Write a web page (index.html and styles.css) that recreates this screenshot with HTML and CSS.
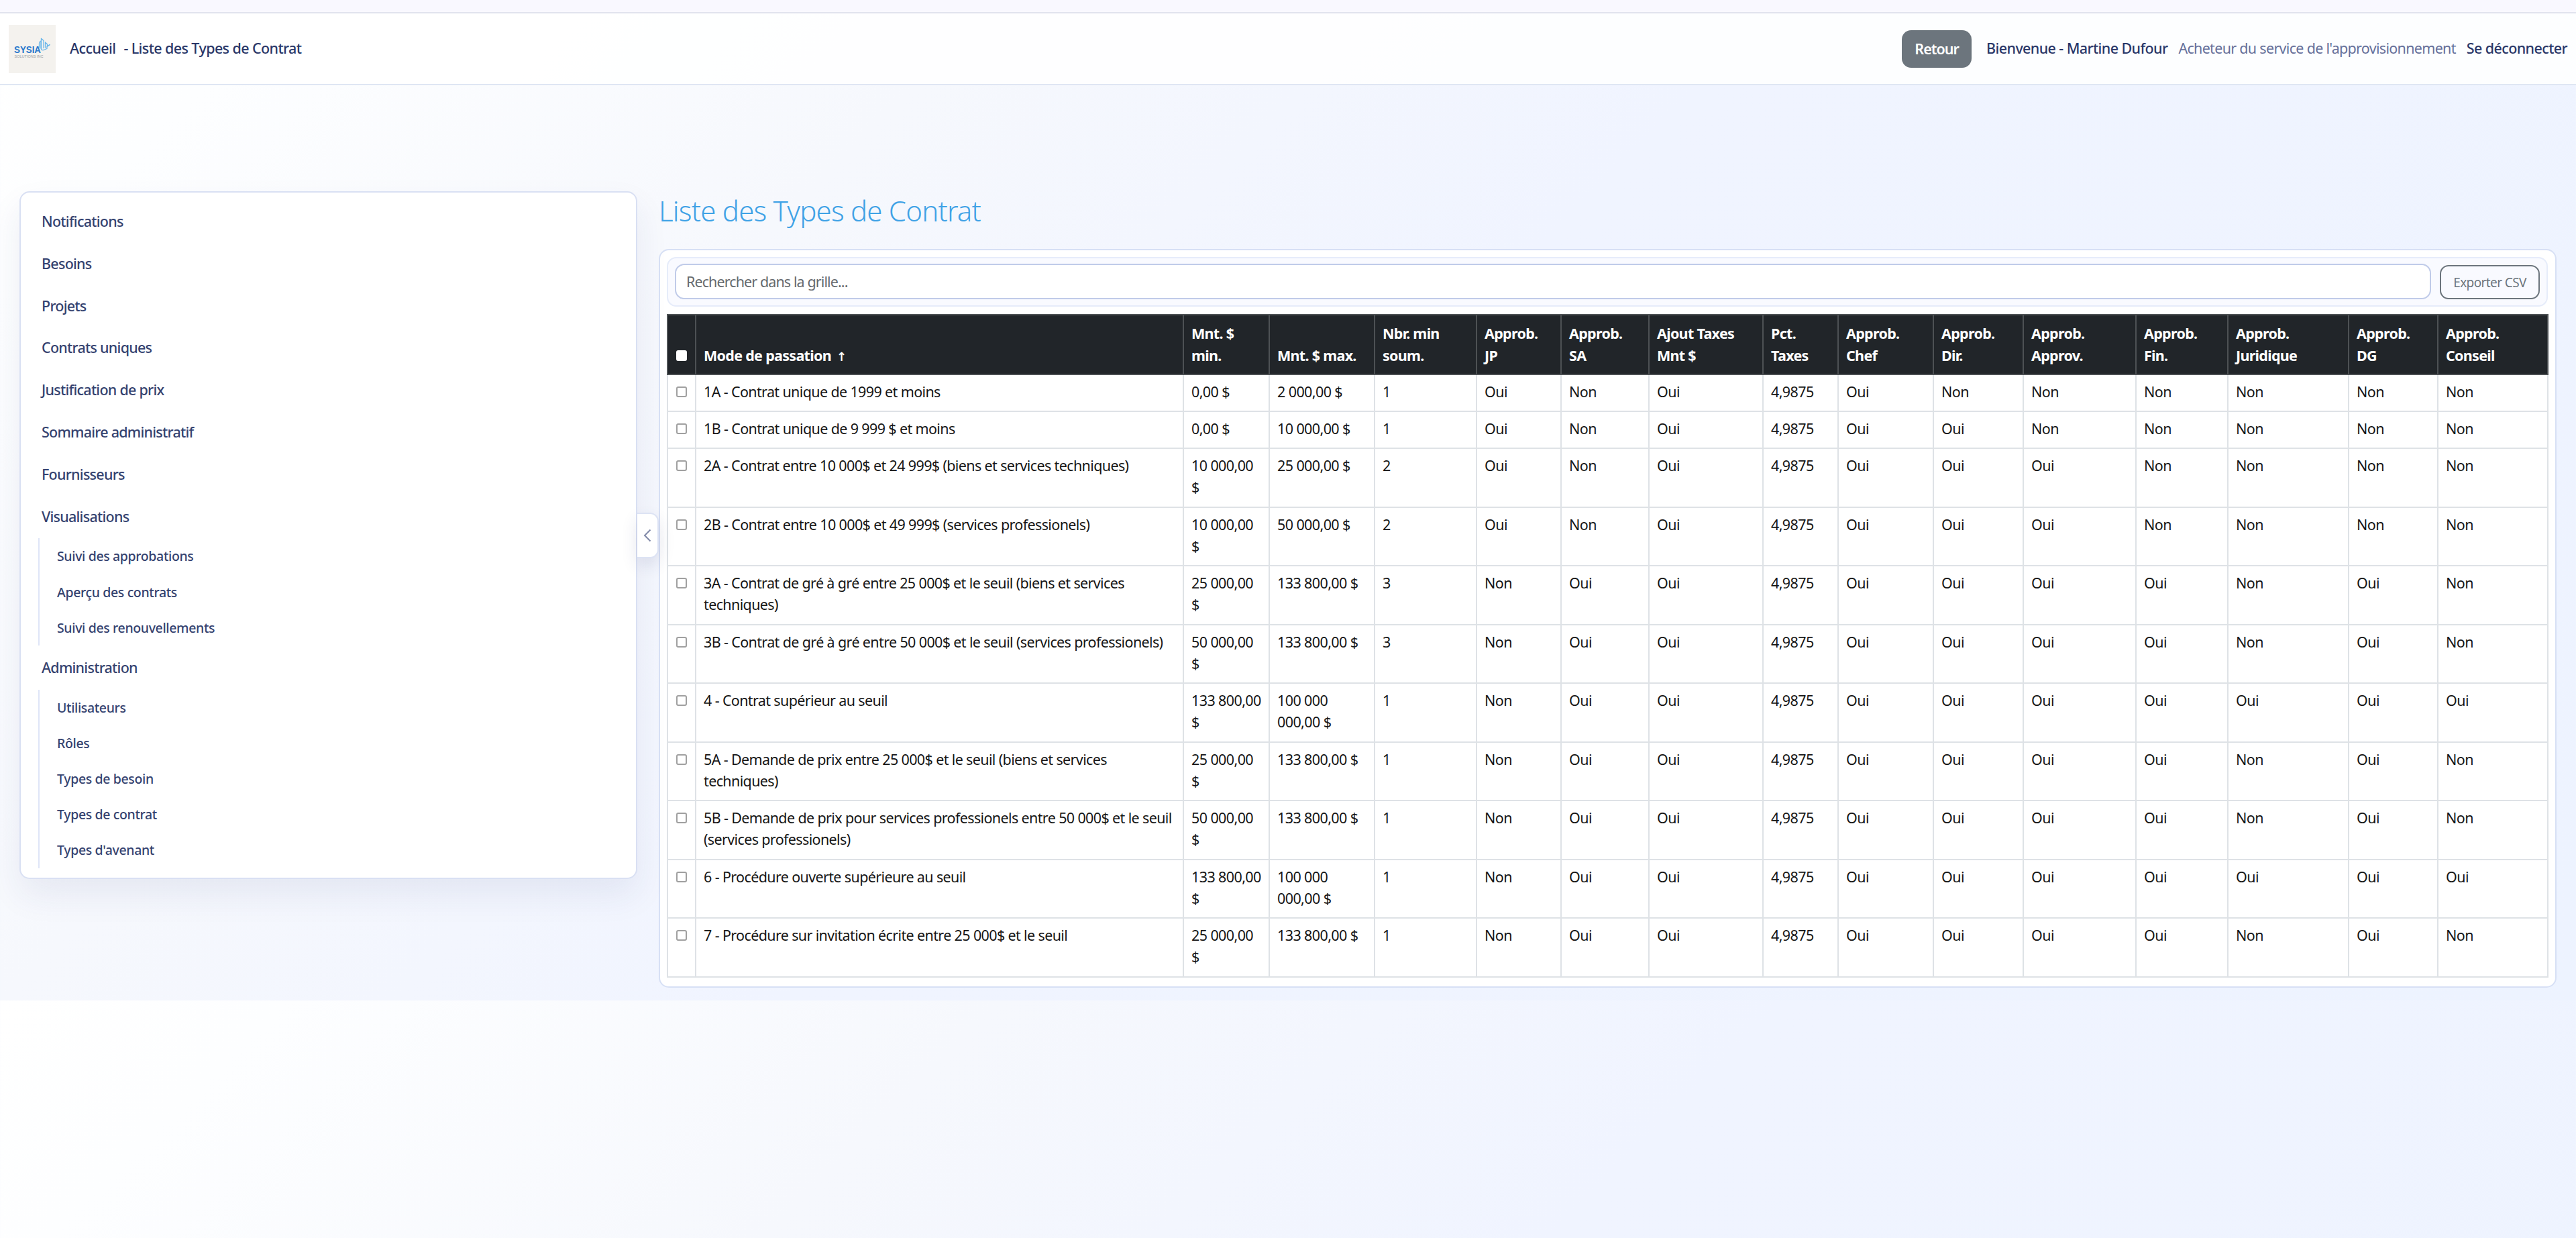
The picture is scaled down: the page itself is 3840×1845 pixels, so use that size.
FILE: index.html
```html
<!DOCTYPE html>
<html lang="fr">
<head>
    <meta charset="UTF-8">
    <meta name="viewport" content="width=device-width, initial-scale=1.0">
    <title>Liste des Types de Contrat</title>
    <link rel="stylesheet" href="styles.css">
</head>
<body>
    <header class="navbar">
        <div class="brand">
            <svg class="logo" viewBox="0 0 70 72">
                <rect width="70" height="72" fill="#f4f2ee"/>
                <text class="logo-name" x="8" y="42" textLength="40" lengthAdjust="spacingAndGlyphs">SYSIA</text>
                <text class="logo-sub" x="8.5" y="48.5" textLength="43" lengthAdjust="spacingAndGlyphs">SOLUTIONS INC</text>
                <g fill="none" stroke="#6ab6ea" stroke-width="1.3" stroke-linecap="round" stroke-linejoin="round">
                    <path d="M45.500 34V28q0-3 2.500-4V35"/>
                    <path d="M48.500 20.500v15.500q0 2 3.500 1.500l5-2v-3l4-3"/>
                    <path d="M48.500 20.500l3.500 3v11"/>
                    <path d="M54.500 34V26l3 3v3l3.500-2"/>
                </g>
            </svg>
            <a class="nav-link home">Accueil</a>
            <span class="nav-link">- Liste des Types de Contrat</span>
        </div>
        <div class="user">
            <button class="btn-back">Retour</button>
            <span class="nav-link welcome">Bienvenue - Martine Dufour</span>
            <span class="role">Acheteur du service de l'approvisionnement</span>
            <a class="nav-link">Se déconnecter</a>
        </div>
    </header>

    <div class="layout">
        <aside class="sidebar">
            <ul class="menu">
                <li>Notifications</li>
                <li>Besoins</li>
                <li>Projets</li>
                <li>Contrats uniques</li>
                <li>Justification de prix</li>
                <li>Sommaire administratif</li>
                <li>Fournisseurs</li>
                <li>Visualisations</li>
            </ul>
            <ul class="submenu">
                <li>Suivi des approbations</li>
                <li>Aperçu des contrats</li>
                <li>Suivi des renouvellements</li>
            </ul>
            <ul class="menu">
                <li>Administration</li>
            </ul>
            <ul class="submenu">
                <li>Utilisateurs</li>
                <li>Rôles</li>
                <li>Types de besoin</li>
                <li>Types de contrat</li>
                <li>Types d'avenant</li>
            </ul>
            <button class="toggle" aria-label="Réduire le menu">
                <svg viewBox="0 0 12 20"><path d="M10.500 1.500L2 10l8.500 8.500" fill="none" stroke="#8089a8" stroke-width="2"/></svg>
            </button>
        </aside>

        <main class="content">
            <h1>Liste des Types de Contrat</h1>
            <div class="card">
                <div class="toolbar">
                    <input class="search" type="text" placeholder="Rechercher dans la grille...">
                    <button class="btn-export">Exporter CSV</button>
                </div>
                <table class="grid">
                    <colgroup>
                        <col class="c-check"><col class="c-mode"><col class="c-min"><col class="c-max">
                        <col class="c-nbr"><col class="c-jp"><col class="c-sa"><col class="c-ajout">
                        <col class="c-pct"><col class="c-chef"><col class="c-dir"><col class="c-approv">
                        <col class="c-fin"><col class="c-jur"><col class="c-dg"><col class="c-conseil">
                    </colgroup>
                    <thead>
                        <tr>
                            <th><input type="checkbox"></th>
                            <th>Mode de passation <span class="sort">↑</span></th>
                            <th>Mnt. $<br>min.</th>
                            <th>Mnt. $ max.</th>
                            <th>Nbr. min<br>soum.</th>
                            <th>Approb.<br>JP</th>
                            <th>Approb.<br>SA</th>
                            <th>Ajout Taxes<br>Mnt $</th>
                            <th>Pct.<br>Taxes</th>
                            <th>Approb.<br>Chef</th>
                            <th>Approb.<br>Dir.</th>
                            <th>Approb.<br>Approv.</th>
                            <th>Approb.<br>Fin.</th>
                            <th>Approb.<br>Juridique</th>
                            <th>Approb.<br>DG</th>
                            <th>Approb.<br>Conseil</th>
                        </tr>
                    </thead>
                    <tbody id="rows"></tbody>
                </table>
            </div>
        </main>
    </div>

    <script>
        // mode, min, max, nbr, then JP SA Ajout | Chef Dir Approv Fin Jur DG Conseil (O = Oui, N = Non)
        const contrats = [
            ["1A - Contrat unique de 1999 et moins", "0,00 $", "2 000,00 $", 1, "ONO", "ONNNNNN"],
            ["1B - Contrat unique de 9 999 $ et moins", "0,00 $", "10 000,00 $", 1, "ONO", "OONNNNN"],
            ["2A - Contrat entre 10 000$ et 24 999$ (biens et services techniques)", "10 000,00<br>$", "25 000,00 $", 2, "ONO", "OOONNNN"],
            ["2B - Contrat entre 10 000$ et 49 999$ (services professionels)", "10 000,00<br>$", "50 000,00 $", 2, "ONO", "OOONNNN"],
            ["3A - Contrat de gré à gré entre 25 000$ et le seuil (biens et services<br>techniques)", "25 000,00<br>$", "133 800,00 $", 3, "NOO", "OOOONON"],
            ["3B - Contrat de gré à gré entre 50 000$ et le seuil (services professionels)", "50 000,00<br>$", "133 800,00 $", 3, "NOO", "OOOONON"],
            ["4 - Contrat supérieur au seuil", "133 800,00<br>$", "100 000<br>000,00 $", 1, "NOO", "OOOOOOO"],
            ["5A - Demande de prix entre 25 000$ et le seuil (biens et services<br>techniques)", "25 000,00<br>$", "133 800,00 $", 1, "NOO", "OOOONON"],
            ["5B - Demande de prix pour services professionels entre 50 000$ et le seuil<br>(services professionels)", "50 000,00<br>$", "133 800,00 $", 1, "NOO", "OOOONON"],
            ["6 - Procédure ouverte supérieure au seuil", "133 800,00<br>$", "100 000<br>000,00 $", 1, "NOO", "OOOOOOO"],
            ["7 - Procédure sur invitation écrite entre 25 000$ et le seuil", "25 000,00<br>$", "133 800,00 $", 1, "NOO", "OOOONON"]
        ];

        function ouiNon(flags) {
            return [...flags].map(f => f === "O" ? "Oui" : "Non");
        }

        document.getElementById("rows").innerHTML = contrats.map(c => {
            const cells = [c[0], c[1], c[2], c[3], ...ouiNon(c[4]), "4,9875", ...ouiNon(c[5])];
            const tall = c[1].includes("<br>") ? ' class="tall"' : "";
            return `<tr${tall}><td><input type="checkbox"></td>${cells.map(v => `<td>${v}</td>`).join("")}</tr>`;
        }).join("");
    </script>
</body>
</html>
```
FILE: styles.css
```css
* {
    box-sizing: border-box;
    margin: 0;
    padding: 0;
}

body {
    min-height: 1490px;
    padding-top: 18px;
    font-family: "Noto Sans", "Open Sans", sans-serif;
    font-size: 21.5px;
    letter-spacing: -0.6px;
    line-height: 32.4px;
    color: #161616;
    background: linear-gradient(135deg, #ffffff 0%, #fdfeff 8%, #f6f8fd 28%, #f0f4ff 50%, #edf3ff 100%);
}

html::before {
    content: "";
    position: absolute;
    top: 0;
    left: 0;
    width: 100%;
    height: 18px;
    background: #f9f8ff;
}

button, input {
    font-family: inherit;
    letter-spacing: inherit;
}

ul {
    list-style: none;
}

/* Navbar */
.navbar {
    display: flex;
    justify-content: space-between;
    align-items: center;
    height: 109px;
    padding: 0 13px 0 13px;
    background: rgba(255, 255, 255, 0.85);
    border-top: 2px solid #e1e3ee;
    border-bottom: 2px solid #dfe6f3;
}

.brand, .user {
    display: flex;
    align-items: center;
}

.logo {
    width: 70px;
    height: 72px;
    margin-right: 21px;
}

.logo-name {
    font: bold 14px "Liberation Sans", sans-serif;
    letter-spacing: 0;
    fill: #2878cc;
}

.logo-sub {
    font: 5.5px "Liberation Sans", sans-serif;
    letter-spacing: 0;
    fill: #9a9da3;
}

.nav-link {
    font-weight: 500;
    color: #2a3768;
}

.home {
    margin-right: 12px;
}

.btn-back {
    width: 104px;
    height: 56px;
    margin-right: 22px;
    border: none;
    border-radius: 14px;
    background: #6c757d;
    color: #fff;
    font-size: 21.5px;
    font-weight: 600;
    letter-spacing: -1px;
}

.welcome, .role {
    margin-right: 16px;
}

.role {
    color: #66709a;
    letter-spacing: -0.69px;
}

/* Page layout */
.layout {
    display: flex;
    align-items: flex-start;
    gap: 32px;
    padding: 158px 29px 19px;
}

/* Sidebar */
.sidebar {
    position: relative;
    flex: none;
    width: 921px;
    height: 1025px;
    padding: 12px 26px;
    background: #fff;
    border: 2px solid #d9e0f3;
    border-radius: 15px;
    box-shadow: 0 24px 50px rgba(40, 50, 110, 0.08);
    color: #34426f;
    font-weight: 500;
}

.menu li {
    height: 62.8px;
    padding-left: 5px;
    line-height: 62.8px;
    letter-spacing: -0.74px;
}

.submenu {
    margin: 1px 0 2px;
    padding-left: 26px;
    border-left: 2px solid #dfe5f8;
}

.submenu li {
    height: 53.2px;
    font-size: 19.5px;
    line-height: 53.2px;
    letter-spacing: -0.36px;
}

.toggle {
    position: absolute;
    top: 477px;
    left: 919px;
    width: 32px;
    height: 68px;
    padding-top: 4px;
    background: #fff;
    border: 2px solid #dde3f4;
    border-left: none;
    border-radius: 0 13px 13px 0;
    box-shadow: 0 10px 24px rgba(40, 50, 110, 0.12);
}

.toggle svg {
    width: 12px;
    height: 20px;
}

/* Content */
.content {
    flex: 1;
    min-width: 0;
}

h1 {
    height: 86px;
    font-size: 42px;
    font-weight: 300;
    line-height: 57px;
    letter-spacing: -0.79px;
    color: #3fa2e6;
}

.card {
    padding: 10px 11px 13px 10px;
    background: #fff;
    border: 2px solid #d7e0f5;
    border-radius: 15px;
}

.toolbar {
    display: flex;
    align-items: flex-end;
    gap: 13px;
    height: 74px;
    margin-bottom: 11px;
    padding: 9px 10px;
    background: #f9faff;
    border: 2px solid #e6ecfa;
    border-radius: 14px;
}

.search {
    flex: 1;
    height: 53px;
    padding: 0 15px;
    background: #fff;
    border: 2px solid #c0cbe9;
    border-radius: 14px;
    font-size: 21.5px;
}

.search::placeholder {
    color: #666a6e;
    letter-spacing: -0.9px;
}

.btn-export {
    width: 149px;
    height: 51px;
    background: transparent;
    border: 2px solid #6c757d;
    border-radius: 13px;
    color: #6c757d;
    font-size: 19px;
    letter-spacing: -0.6px;
}

/* Grid */
.grid {
    width: 100%;
    table-layout: fixed;
    border-collapse: collapse;
    background: #fff;
}

.grid th, .grid td {
    padding: 9px 0 0 11px;
    border: 2px solid #dee2e6;
    text-align: left;
    vertical-align: top;
    white-space: nowrap;
}

.grid th {
    height: 89px;
    padding: 0 0 11px 11px;
    background: #212529;
    border-color: #4d5154;
    color: #fff;
    vertical-align: bottom;
    letter-spacing: -0.7px;
}

.grid td {
    height: 55px;
}

.grid .tall td {
    height: 87.5px;
}

/* mode de passation */
.grid td:nth-child(2) {
    letter-spacing: -0.63px;
}

.grid input {
    appearance: none;
    width: 16px;
    height: 16px;
    margin-left: 1px;
    background: #fff;
    border: 2px solid #a0a0a0;
    border-radius: 3px;
}

.grid th input {
    border-color: #fff;
}

.sort {
    margin-left: 3px;
    font-family: "DejaVu Sans", sans-serif;
    font-size: 18px;
    line-height: 1;
}

.c-check { width: 42px; }
.c-mode { width: 727px; }
.c-min { width: 128px; }
.c-max { width: 157px; }
.c-nbr { width: 152px; }
.c-jp { width: 126px; }
.c-sa { width: 131px; }
.c-ajout { width: 170px; }
.c-pct { width: 112px; }
.c-chef { width: 142px; }
.c-dir { width: 134px; }
.c-approv { width: 168px; }
.c-fin { width: 137px; }
.c-jur { width: 180px; }
.c-dg { width: 133px; }
.c-conseil { width: 164px; }
```
